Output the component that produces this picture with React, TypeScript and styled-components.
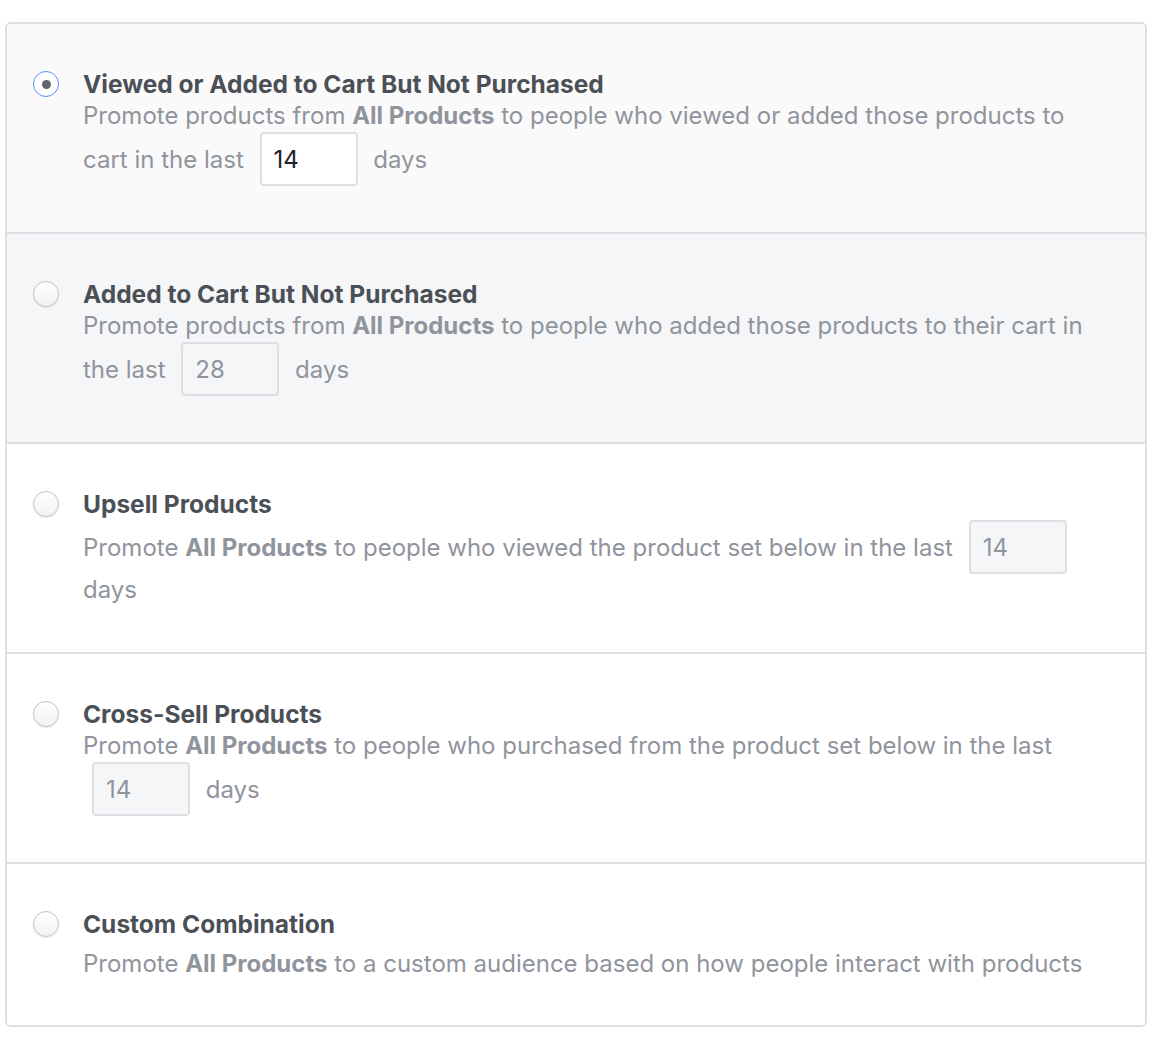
import styled, { createGlobalStyle } from "styled-components";

const GlobalStyle = createGlobalStyle`
    body {
        margin: 0;
        background: #ffffff;
        font-family: Inter, "Liberation Sans", Arial, sans-serif;
        -webkit-font-smoothing: antialiased;
    }
`;

const Page = styled.div`
    padding: 22px 23px 17px 5px;
`;

const Card = styled.div`
    border: 2px solid #dddfe2;
    border-radius: 6px;
    overflow: hidden;
`;

const Row = styled.div<{ $bg?: string; $last?: boolean }>`
    display: flex;
    align-items: flex-start;
    gap: 24px;
    padding: 44px 40px ${props => (props.$last ? 45 : 46)}px 26px;
    background: ${props => props.$bg || "#ffffff"};
    border-bottom: ${props => (props.$last ? "none" : "2px solid #dddfe2")};
`;

const Radio = styled.span<{ $checked?: boolean }>`
    flex: none;
    box-sizing: border-box;
    width: 26px;
    height: 26px;
    margin-top: 3px;
    border-radius: 50%;
    display: flex;
    align-items: center;
    justify-content: center;
    border: ${props => (props.$checked ? "1.5px solid #5890ff" : "1.5px solid #bec3c9")};
    background: ${props => (props.$checked ? "#ffffff" : "linear-gradient(#ffffff, #f1f2f4)")};
    box-shadow: ${props => (props.$checked ? "none" : "0 1px 1px rgba(0,0,0,0.08)")};
    &::after {
        content: "";
        display: ${props => (props.$checked ? "block" : "none")};
        width: 9px;
        height: 9px;
        border-radius: 50%;
        background: #606770;
    }
`;

const Body = styled.div`
    flex: 1;
    min-width: 0;
`;

const Title = styled.div`
    font-size: 24.5px;
    line-height: 32px;
    font-weight: 700;
    color: #4b4f56;
`;

const Desc = styled.div<{ $gap?: number }>`
    margin-top: ${props => props.$gap || 0}px;
    font-size: 24px;
    line-height: 32px;
    color: #90949c;
    b {
        font-weight: 700;
    }
`;

const DaysInput = styled.input<{ $active?: boolean }>`
    box-sizing: border-box;
    width: 98px;
    height: 54px;
    margin: 0 9px;
    padding: 0 12px;
    vertical-align: baseline;
    font-family: inherit;
    font-size: 24px;
    border-radius: 4px;
    border: 2px solid #dddfe2;
    background: ${props => (props.$active ? "#ffffff" : "#f5f6f7")};
    color: ${props => (props.$active ? "#1d2129" : "#90949c")};
    outline: none;
`;

export default function App() {
    return (
        <Page>
            <GlobalStyle />
            <Card>
                <Row $bg="#fafafa">
                    <Radio $checked />
                    <Body>
                        <Title>Viewed or Added to Cart But Not Purchased</Title>
                        <Desc>
                            Promote products from <b>All Products</b> to people who viewed or added those products to cart in the last{" "}
                            <DaysInput $active defaultValue="14" /> days
                        </Desc>
                    </Body>
                </Row>
                <Row $bg="#f5f6f7">
                    <Radio />
                    <Body>
                        <Title>Added to Cart But Not Purchased</Title>
                        <Desc>
                            Promote products from <b>All Products</b> to people who added those products to their cart in the last{" "}
                            <DaysInput disabled defaultValue="28" /> days
                        </Desc>
                    </Body>
                </Row>
                <Row>
                    <Radio />
                    <Body>
                        <Title>Upsell Products</Title>
                        <Desc>
                            Promote <b>All Products</b> to people who viewed the product set below in the last{" "}
                            <DaysInput disabled defaultValue="14" /> days
                        </Desc>
                    </Body>
                </Row>
                <Row>
                    <Radio />
                    <Body>
                        <Title>Cross-Sell Products</Title>
                        <Desc>
                            Promote <b>All Products</b> to people who purchased from the product set below in the last{" "}
                            <DaysInput disabled defaultValue="14" /> days
                        </Desc>
                    </Body>
                </Row>
                <Row $last>
                    <Radio />
                    <Body>
                        <Title>Custom Combination</Title>
                        <Desc $gap={8}>
                            Promote <b>All Products</b> to a custom audience based on how people interact with products
                        </Desc>
                    </Body>
                </Row>
            </Card>
        </Page>
    );
}
